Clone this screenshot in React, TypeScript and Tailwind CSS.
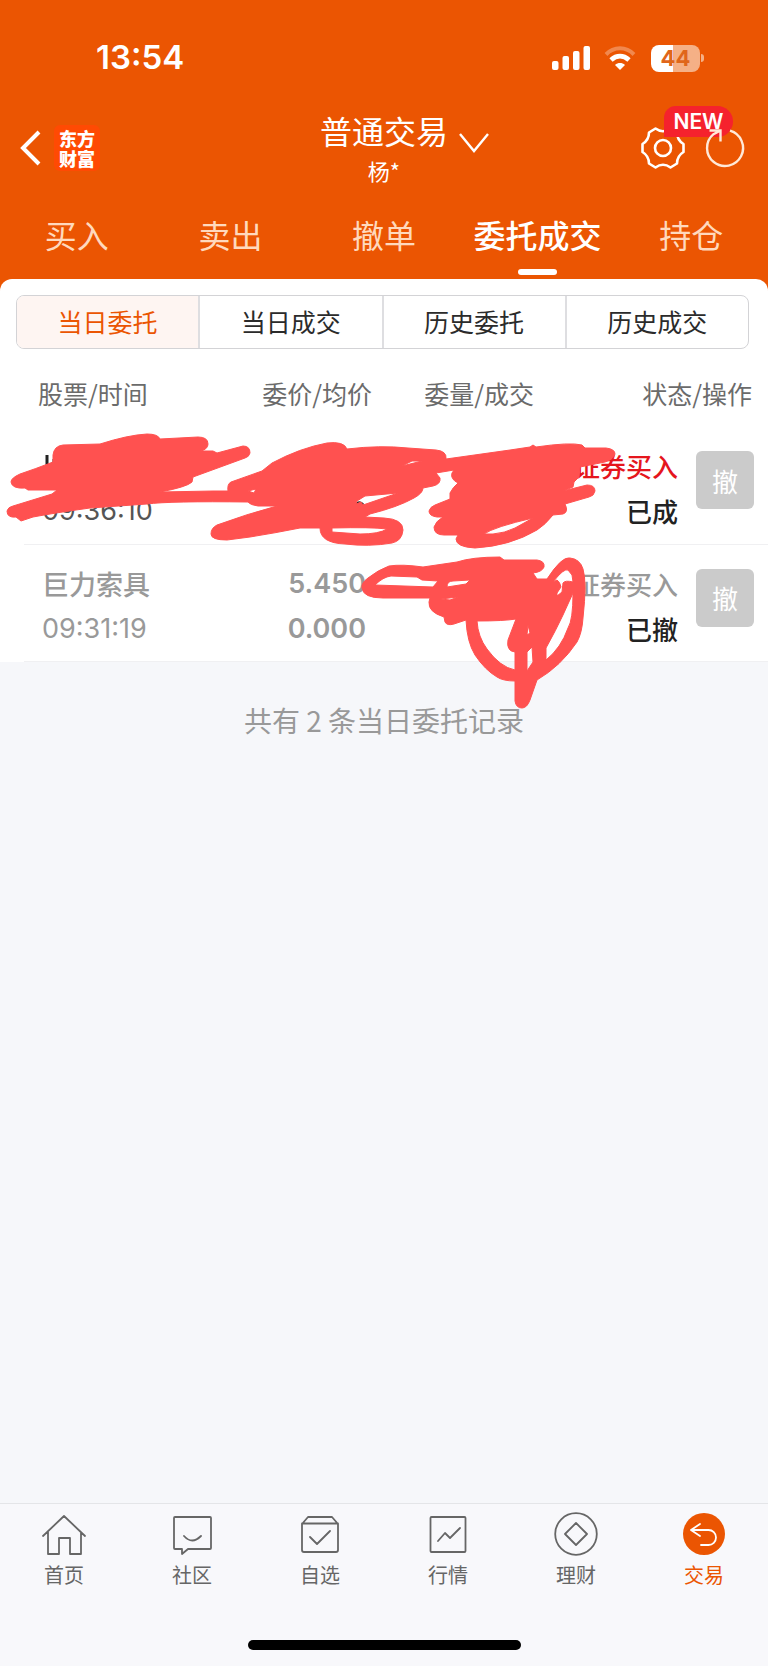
import type { ReactNode } from 'react'
import clsx from 'clsx'

const tabs = ['买入', '卖出', '撤单', '委托成交', '持仓']
const segments = ['当日委托', '当日成交', '历史委托', '历史成交']

const orders = [
  { name: '', time: '09:36:10', price: '', average: '', side: '证券买入', status: '已成', done: true },
  { name: '巨力索具', time: '09:31:19', price: '5.450', average: '0.000', side: '证券买入', status: '已撤', done: false },
]

const NavIcon = ({ children }: { children: ReactNode }) => (
  <svg viewBox="0 0 44 44" className="w-11 h-11" fill="none" stroke="currentColor" strokeWidth="1.8" strokeLinejoin="round" strokeLinecap="round" aria-hidden="true">
    {children}
  </svg>
)

const navItems = [
  {
    label: '首页',
    icon: <path d="M1 24 22 4l21 20M6 20v22h11V26h11v16h11V20" />,
  },
  {
    label: '社区',
    icon: <path d="M5 5h35a1 1 0 0 1 1 1v30a1 1 0 0 1-1 1H18l-6 5v-5H5a1 1 0 0 1-1-1V6a1 1 0 0 1 1-1ZM14 24q8 9 17 0" />,
  },
  {
    label: '自选',
    icon: <path d="M4 12v26a2 2 0 0 0 2 2h32a2 2 0 0 0 2-2V12l-6-7H10ZM4 11.500h36M12 25l7 7 13-13" />,
  },
  {
    label: '行情',
    icon: (
      <>
        <rect x="4.500" y="5" width="35" height="35" rx="1" />
        <path d="m12 29 7-8 5 5 10-10" />
      </>
    ),
  },
  {
    label: '理财',
    icon: (
      <>
        <circle cx="22" cy="22" r="20.800" />
        <path d="m22 11 11 11-11 11-11-11Z" />
      </>
    ),
  },
  {
    label: '交易',
    active: true,
    icon: (
      <>
        <circle cx="22" cy="22" r="21" fill="#eb5502" stroke="none" />
        <path d="M18 12 9 18l9 6M9 18h17.500a7.500 7.500 0 0 1 0 15H19" stroke="#fff" />
      </>
    ),
  },
]

const StatusBar = () => {
  return (
    <div className="flex justify-between items-center h-[110px] pt-1.5 pl-24 pr-16">
      <span className="font-['Inter',sans-serif] text-[33px] font-semibold">13:54</span>
      <div className="flex items-center">
        <svg viewBox="0 0 38 24" className="w-[38px] h-6" fill="#fff" aria-hidden="true">
          <rect x="0" y="15" width="6.500" height="9" rx="2" />
          <rect x="10.500" y="10" width="6.500" height="14" rx="2" />
          <rect x="21" y="5" width="6.500" height="19" rx="2" />
          <rect x="31.500" y="0" width="6.500" height="24" rx="2" />
        </svg>
        <svg viewBox="0 0 32 24" className="w-8 h-6 ml-[14px]" fill="none" stroke="#fff" aria-hidden="true">
          <path d="M2 8.500C10 .300 22 .300 30 8.500" strokeWidth="4" opacity=".3" />
          <path d="M7 14c5.500-5 12.500-5 18 0" strokeWidth="4.800" />
          <path d="M16 24l-5-5c3-2.600 7-2.600 10 0Z" fill="#fff" stroke="none" />
        </svg>
        <div className="flex items-center ml-[15px]">
          <div className="flex items-center justify-center w-[49px] h-[27px] rounded-lg bg-linear-to-r from-white from-44% to-[#f5b086] to-44% text-[#e0661a] font-['Inter',sans-serif] text-[22px] leading-[27px] font-bold">
            44
          </div>
          <div className="w-[3px] h-2 ml-px rounded-r-full bg-[#f5b086]" />
        </div>
      </div>
    </div>
  )
}

const TitleBar = () => {
  return (
    <div className="grid grid-cols-[1fr_auto_1fr] items-center h-[72px]">
      <div className="flex items-center pl-5">
        <button aria-label="返回">
          <svg viewBox="0 0 22 36" className="w-[22px] h-9" fill="none" stroke="#fff" strokeWidth="4" aria-hidden="true">
            <path d="M19 2 3 18l16 16" />
          </svg>
        </button>
        <div className="shrink-0 w-[46px] h-[46px] ml-3 px-[5px] py-[3px] rounded-md bg-[#ff4a03] text-[18px] leading-5 font-black break-all">
          东方财富
        </div>
      </div>
      <div className="text-center">
        <button className="relative block text-[32px] leading-10">
          普通交易
          <svg viewBox="0 0 32 22" className="absolute left-full top-[22px] w-8 h-[22px] ml-[10px]" fill="none" stroke="#fff" strokeWidth="2.400" aria-hidden="true">
            <path d="m2 2 14 17L30 2" />
          </svg>
        </button>
        <p className="text-[22px] leading-8 pt-1">杨*</p>
      </div>
      <div className="flex justify-end gap-[18px] pr-[21px]">
        <button className="relative" aria-label="设置">
          <svg viewBox="0 0 44 44" className="w-11 h-11" fill="none" stroke="#fff" strokeWidth="2.600" strokeLinejoin="round" aria-hidden="true">
            <path d="M14.500 2.500Q22 8 29.500 2.500L36 6.500Q36 14 42.500 18V26Q36 30 36 37.500L29.500 41.500Q22 36 14.500 41.500L8 37.500Q8 30 1.500 26V18Q8 14 8 6.500Z" />
            <circle cx="22" cy="22" r="8" />
          </svg>
          <span className="absolute left-[23px] -top-5 w-[69px] h-[31px] rounded-2xl rounded-tl-xl rounded-bl-none bg-[#f5222d] font-['Inter',sans-serif] text-[21px] leading-[31px] font-semibold text-center">
            NEW
          </span>
        </button>
        <button className="relative" aria-label="刷新">
          <svg viewBox="0 0 44 44" className="w-11 h-11" fill="none" stroke="#ffe9d8" strokeWidth="2.400" aria-hidden="true">
            <path d="M27 4.700A18 18 0 1 1 10.500 8.200L17.500 4.500M6.500 4.500h11v11" />
          </svg>
        </button>
      </div>
    </div>
  )
}

const Tabs = () => {
  return (
    <nav className="grid grid-cols-5 h-[97px] pt-7">
      {tabs.map((tab) => {
        const active = tab === '委托成交'
        return (
          <a key={tab} href="#" className={clsx('flex flex-col items-center', active ? 'font-medium' : 'text-[#ffd9bd]')}>
            <span className="text-[32px] leading-[48px] whitespace-nowrap">{tab}</span>
            {active && <span className="w-[39px] h-1.5 mt-[11px] rounded-full bg-white" />}
          </a>
        )
      })}
    </nav>
  )
}

const Segments = () => {
  return (
    <div className="flex ml-4 mr-[19px] h-[54px] border border-[#d3d3d6] rounded-lg overflow-hidden divide-x-2 divide-[#dedee1]">
      {segments.map((segment, i) => (
        <button key={segment} className={clsx('flex-1 text-[25px]', i === 0 ? 'bg-[#fef5f2] text-[#eb5502]' : 'text-[#2b2b2b]')}>
          {segment}
        </button>
      ))}
    </div>
  )
}

const OrderTable = () => {
  return (
    <div className="pl-6">
      <table className="w-full table-fixed">
        <colgroup>
          <col />
          <col className="w-[116px]" />
          <col className="w-[162px]" />
          <col className="w-[144px]" />
          <col className="w-[90px]" />
        </colgroup>
        <thead>
          <tr className="h-[78px] text-[25px] text-[#6b6b6b] whitespace-nowrap">
            <th className="pt-3 pl-[14px] text-left font-normal">股票/时间</th>
            <th className="pt-3 text-right font-normal">委价/均价</th>
            <th className="pt-3 text-right font-normal">委量/成交</th>
            <th colSpan={2} className="pt-3 pr-4 text-right font-normal">状态/操作</th>
          </tr>
        </thead>
        <tbody>
          {orders.map((order) => (
            <tr
              key={order.time}
              className={clsx('h-[117px] align-top text-[26px] leading-[45px] border-b border-[#f0f0f2]', order.done ? 'text-[#555]' : 'text-[#999]')}
            >
              <td className="pt-4 pl-[18px] text-[27px]">
                <p className="h-[45px] font-medium">{order.name}</p>
                <p className="h-[45px] font-['Inter',sans-serif]">{order.time}</p>
              </td>
              <td className="pt-4 pr-[6px] text-right text-[27px] font-['Inter',sans-serif] font-semibold">
                <p>{order.price}</p>
                <p>{order.average}</p>
              </td>
              <td />
              <td className="pt-4 text-right font-medium">
                <p className={clsx(order.done && 'text-[#e5161d]')}>{order.side}</p>
                <p className="text-[#222]">{order.status}</p>
              </td>
              <td className="pt-6 pl-[18px]">
                <button className="block w-[58px] h-[58px] rounded-md bg-[#cbcbcb] text-white">撤</button>
              </td>
            </tr>
          ))}
        </tbody>
      </table>
    </div>
  )
}

// Hand-drawn marker strokes that hide the private columns
const Marker = () => {
  return (
    <svg viewBox="0 279 768 440" className="absolute left-0 top-0 w-full pointer-events-none" aria-hidden="true">
      <path d="M47 455v14M54 459v8M356 504q4-3 7 1" fill="none" stroke="#222" strokeWidth="3" />
      <g fill="#ff5150" fillRule="evenodd" stroke="#ff5150" strokeWidth="1" strokeLinejoin="round">
        <path
          d="M53 462V455Q54 446 63 445L100 444Q128 435 147 434Q158 434 160 439L198 437Q208 437 208 444Q208 449 201 451L213 451 217 453 243 446Q250 446 250 453Q249 457 245 458L193 477 192 482Q187 487 160 492L213 491H228Q227 484 231 482L262 471 272 463Q300 448 327 443Q344 441 347 449Q380 445 408 448L436 450Q447 451 446 459L510 450 530 447 533 445 536 447Q570 442 582 445L585 448H606Q615 449 615 454Q614 459 605 462L580 467 579 477 574 482 573 487 563 491 587 485Q595 485 595 491Q594 496 589 497L565 504Q569 512 563 514L553 515Q545 525 537 530Q510 546 475 548Q456 547 456 539L458 535H444Q434 535 434 527Q436 521 443 517H437Q429 516 429 511Q430 507 435 505L450 499V493Q453 487 458 483Q450 479 452 473L454 470 436 473 440 478Q441 484 433 486L423 488Q423 493 414 498Q398 507 370 514L365 517 384 518Q403 519 403 530Q402 541 392 543Q369 547 345 544Q320 543 320 528H300Q275 533 250 537L227 540Q211 540 211 534Q211 528 217 525Q247 514 277 506H258Q250 505 248 502Q170 501 147 504L90 508Q54 513 33 517L21 521 16 517Q7 518 7 511Q8 507 13 506L52 494 57 490H28L25 488Q12 489 11 482Q11 478 20 474Q35 469 53 462ZM248 491 256 489 254 493ZM357 501 365 496 398 493 363 505 361 502 356 504ZM332 528Q372 527 387 529Q379 534 360 534L332 532ZM402 466 412 461 422 461ZM484 534Q494 527 533 518L515 528Q505 533 493 534Z"
        />
        <path
          d="M362 588Q361 583 368 578Q378 570 389 566Q402 564 423 567L457 562Q472 557 500 557L504 560 537 560Q545 561 544 567Q542 572 533 573L537 579H547Q562 556 570 558Q580 559 583 569Q587 582 583 618Q582 633 577 642Q561 666 537 680L530 700Q527 708 522 708Q516 708 515 701V681Q503 681 497 677Q485 670 475 655Q467 642 466 620L454 624Q447 626 445 622L444 617Q428 612 429 602L430 598H383Q363 598 362 588ZM375 585Q383 577 391 576L417 577 422 580 438 581 433 587ZM447 587Q447 581 453 581L470 580 466 584ZM441 599 458 597 450 600ZM477 621Q504 621 516 619L508 640Q506 651 515 652V670Q500 667 487 649Q478 637 477 621ZM528 625 530 633 527 635ZM527 652 532 647 533 662 527 671ZM573 593Q573 620 568 628Q561 648 546 660V648Q556 630 563 615ZM553 582Q564 568 568 570L572 575 573 582Q565 580 563 583L562 592 557 596V593L561 587Q560 582 557 580Z"
        />
      </g>
    </svg>
  )
}

const BottomNav = () => {
  return (
    <footer className="border-t border-[#e4e5e8] bg-[#f8f8fb] pt-2 pb-4">
      <nav className="grid grid-cols-6">
        {navItems.map(({ label, icon, active }) => (
          <a key={label} href="#" className={clsx('flex flex-col items-center gap-[7px] text-xl leading-6', active ? 'text-[#eb5502]' : 'text-[#666]')}>
            <NavIcon>{icon}</NavIcon>
            {label}
          </a>
        ))}
      </nav>
      <div className="w-[273px] h-[10px] mx-auto mt-[53px] rounded-full bg-black" />
    </footer>
  )
}

const App = () => {
  return (
    <div className="flex flex-col min-h-screen bg-[#f6f7fa] font-['Noto_Sans_CJK_SC',sans-serif]">
      <header className="bg-[#eb5502] text-white">
        <StatusBar />
        <TitleBar />
        <Tabs />
      </header>
      <main className="relative flex-1">
        <div className="bg-[#eb5502]">
          <section className="bg-white rounded-t-xl pt-4">
            <Segments />
            <OrderTable />
          </section>
        </div>
        <p className="pt-9 text-center text-[28px] leading-[44px] text-[#999]">共有 2 条当日委托记录</p>
        <Marker />
      </main>
      <BottomNav />
    </div>
  )
}

export default App
